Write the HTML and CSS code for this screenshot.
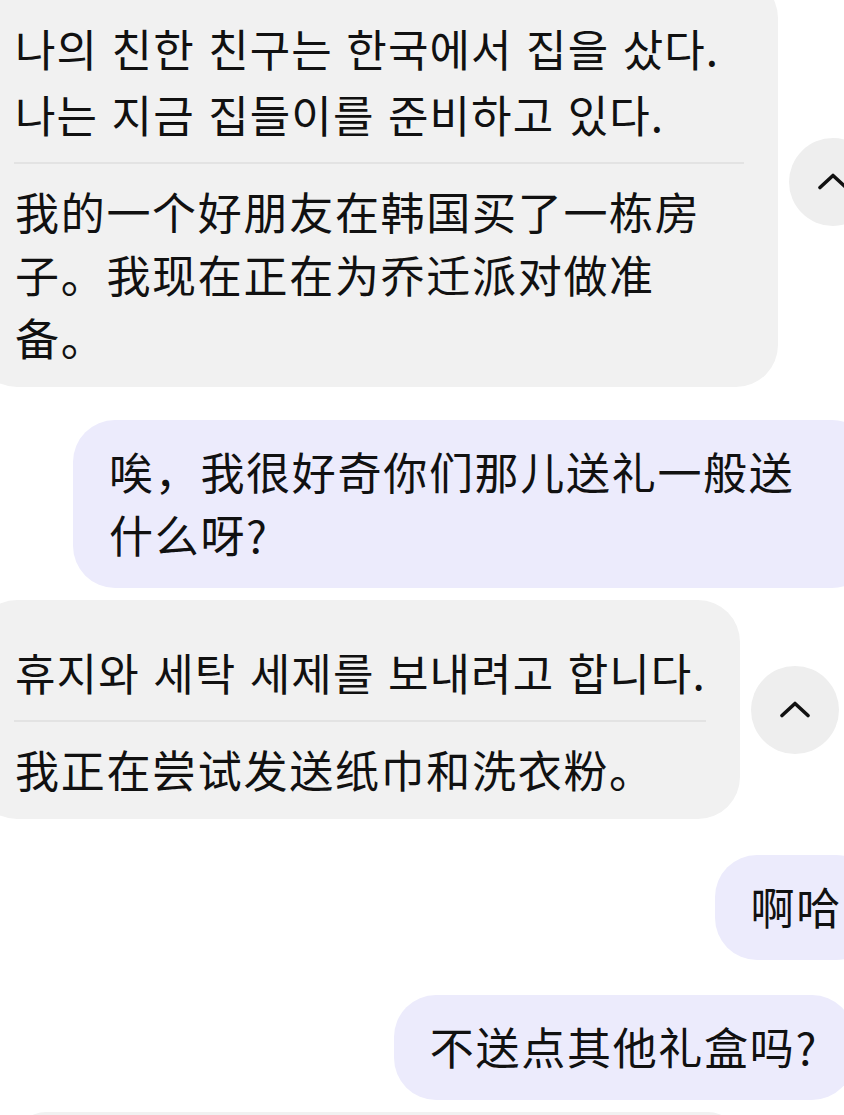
FILE: index.html
```html
<!DOCTYPE html>
<html lang="zh-CN">
<head>
<meta charset="utf-8">
<title>Chat</title>
<link rel="stylesheet" href="styles.css">
</head>
<body>
<div class="chat">
  <div class="row row-in row-first">
    <div class="bubble bubble-in">
      <div class="ko" lang="ko">나의 친한 친구는 한국에서 집을 샀다.<br>나는 지금 집들이를 준비하고 있다.</div>
      <div class="divider"></div>
      <div class="zh">我的一个好朋友在韩国买了一栋房子。我现在正在为乔迁派对做准备。</div>
    </div>
    <button class="toggle" aria-label="收起">
      <svg viewBox="0 0 32 18" width="32" height="18"><path d="M3 15.5 L16 3.5 L29 15.5" fill="none" stroke="#111" stroke-width="3.6" stroke-linecap="round" stroke-linejoin="round"/></svg>
    </button>
  </div>

  <div class="row row-out row-q1">
    <div class="bubble bubble-out zh">唉，我很好奇你们那儿送礼一般送什么呀?</div>
  </div>

  <div class="row row-in row-a2">
    <div class="bubble bubble-in">
      <div class="ko" lang="ko">휴지와 세탁 세제를 보내려고 합니다.</div>
      <div class="divider"></div>
      <div class="zh">我正在尝试发送纸巾和洗衣粉。</div>
    </div>
    <button class="toggle" aria-label="收起">
      <svg viewBox="0 0 32 18" width="32" height="18"><path d="M3 15.5 L16 3.5 L29 15.5" fill="none" stroke="#111" stroke-width="3.6" stroke-linecap="round" stroke-linejoin="round"/></svg>
    </button>
  </div>

  <div class="row row-out row-q2">
    <div class="bubble bubble-out bubble-short zh">啊哈</div>
  </div>

  <div class="row row-out row-q3">
    <div class="bubble bubble-out bubble-ask zh">不送点其他礼盒吗?</div>
  </div>

  <div class="next-bubble"></div>
</div>
</body>
</html>
```

FILE: styles.css
```css
html, body {
  margin: 0;
  padding: 0;
  background: #ffffff;
}

body {
  width: 844px;
  height: 1115px;
  overflow: hidden;
  font-family: "Noto Sans CJK SC", "Noto Sans CJK KR", "Noto Sans", sans-serif;
  color: #111111;
}

.chat {
  display: flex;
  flex-direction: column;
  width: 844px;
}

.row {
  display: flex;
  align-items: center;
  gap: 11px;
}

.row-in {
  justify-content: flex-start;
}

.row-out {
  justify-content: flex-end;
}

.row-first { margin-top: -24px; }
.row-q1 { margin-top: 33px; }
.row-a2 { margin-top: 12px; }
.row-q2 { margin-top: 36px; }
.row-q3 { margin-top: 35px; }

.bubble {
  box-sizing: border-box;
  border-radius: 42px;
  font-size: 44px;
  line-height: 63px;
  flex: none;
}

.bubble-in {
  background: #f1f1f1;
  margin-left: -25px;
  padding: 20px 34px 18px 40px;
  max-width: 803px;
}

.bubble-out {
  background: #ecebfc;
  margin-right: -30px;
  padding: 20px 36px 22px 36px;
  max-width: 801px;
}

.bubble-short {
  margin-right: -34px;
}

.bubble-ask {
  margin-right: -10px;
}

.zh {
  letter-spacing: 1.7px;
}

.ko {
  font-family: "Noto Sans CJK KR", "Noto Sans CJK SC", sans-serif;
  letter-spacing: 1.1px;
  line-height: 66px;
  padding-top: 19px;
}

.divider {
  height: 2px;
  background: #e3e3e3;
  margin: 15px 0 16px -1px;
}

.toggle {
  flex: none;
  width: 88px;
  height: 88px;
  border: none;
  border-radius: 50%;
  background: #eeeeee;
  display: flex;
  align-items: center;
  justify-content: center;
  padding: 0;
  margin-right: -100px;
}

.toggle svg {
  display: block;
  margin-top: -2px;
}

.next-bubble {
  margin-top: 12px;
  margin-left: 16px;
  width: 722px;
  height: 60px;
  background: #f1f1f1;
  border-radius: 30px;
}
```
